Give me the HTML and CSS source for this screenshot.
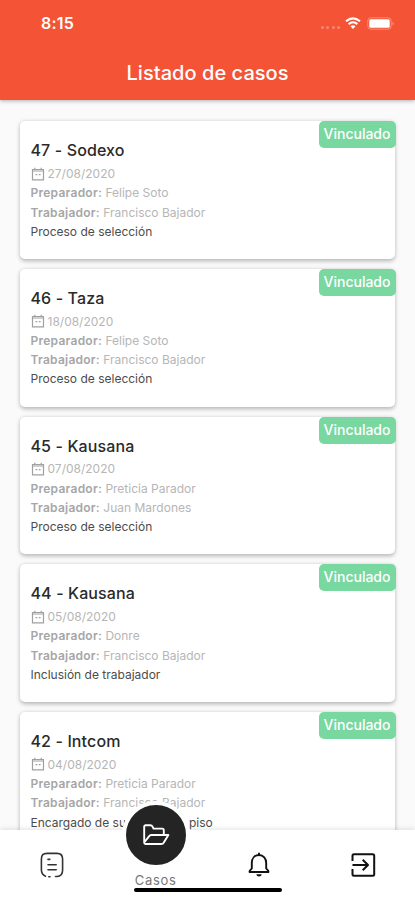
FILE: index.html
```html
<!DOCTYPE html>
<html lang="es">
<head>
<meta charset="utf-8">
<meta name="viewport" content="width=device-width, initial-scale=1">
<title>Listado de casos</title>
<link rel="stylesheet" href="styles.css">
</head>
<body>
<svg class="defs" width="0" height="0" aria-hidden="true">
  <symbol id="calendar" viewBox="0 0 14 14">
    <path d="M1.500 2.500h11v10.300h-11zM1.500 4h11M3.800 .7v2M10.200 .7v2M4.500 7.700h1.800M7.800 7.700h1.800" fill="none" stroke="currentColor" stroke-width="1.200"/>
  </symbol>
</svg>
<div class="app">
  <header class="header">
    <div class="status">
      <span class="time">8:15</span>
      <div class="indicators">
        <span class="signal"><i></i><i></i><i></i><i></i></span>
        <svg class="wifi" viewBox="0 0 16 12" width="16" height="12">
          <path d="M1 4.3Q8-1.6 15 4.3M3.6 7.1Q8 3.4 12.4 7.1" fill="none" stroke="#fff" stroke-width="2.1"/>
          <path d="M8 12L5.5 9.2Q8 7.2 10.5 9.2z" fill="#fff"/>
        </svg>
        <svg class="battery" viewBox="0 0 28 13" width="28" height="13">
          <rect x=".8" y=".8" width="23.4" height="11.4" rx="3.2" fill="none" stroke="#fff" stroke-opacity=".35"/>
          <rect x="2.3" y="2.2" width="20.4" height="8.6" rx="1.5" fill="#fff"/>
          <path d="M25.7 4.5q1.8 2 0 4z" fill="#fff" fill-opacity=".5"/>
        </svg>
      </div>
    </div>
    <h1>Listado de casos</h1>
  </header>
  <main class="list">
    <article class="card">
      <span class="badge">Vinculado</span>
      <h2>47 - Sodexo</h2>
      <p class="date"><svg><use href="#calendar"/></svg><span>27/08/2020</span></p>
      <p><b>Preparador:</b> Felipe Soto</p>
      <p><b>Trabajador:</b> Francisco Bajador</p>
      <p class="stage">Proceso de selección</p>
    </article>
    <article class="card">
      <span class="badge">Vinculado</span>
      <h2>46 - Taza</h2>
      <p class="date"><svg><use href="#calendar"/></svg><span>18/08/2020</span></p>
      <p><b>Preparador:</b> Felipe Soto</p>
      <p><b>Trabajador:</b> Francisco Bajador</p>
      <p class="stage">Proceso de selección</p>
    </article>
    <article class="card">
      <span class="badge">Vinculado</span>
      <h2>45 - Kausana</h2>
      <p class="date"><svg><use href="#calendar"/></svg><span>07/08/2020</span></p>
      <p><b>Preparador:</b> Preticia Parador</p>
      <p><b>Trabajador:</b> Juan Mardones</p>
      <p class="stage">Proceso de selección</p>
    </article>
    <article class="card">
      <span class="badge">Vinculado</span>
      <h2>44 - Kausana</h2>
      <p class="date"><svg><use href="#calendar"/></svg><span>05/08/2020</span></p>
      <p><b>Preparador:</b> Donre</p>
      <p><b>Trabajador:</b> Francisco Bajador</p>
      <p class="stage">Inclusión de trabajador</p>
    </article>
    <article class="card">
      <span class="badge">Vinculado</span>
      <h2>42 - Intcom</h2>
      <p class="date"><svg><use href="#calendar"/></svg><span>04/08/2020</span></p>
      <p><b>Preparador:</b> Preticia Parador</p>
      <p><b>Trabajador:</b> Francisco Bajador</p>
      <p class="stage">Encargado de supervisar el piso</p>
    </article>
  </main>
  <nav class="nav">
    <a class="tab">
      <svg viewBox="0 0 26 28" width="26" height="28" fill="none" stroke="#333" stroke-width="1.600" stroke-linecap="round">
        <path d="M6.500 25.200Q2.400 23.500 2.400 19V8Q2.400 2.400 8 2.400h10Q23.600 2.400 23.600 8v11Q23.600 25.500 18 25.500h-1.500M9.800 25.700h1.200M9 8.400h1.800M9 13.700h8.200M9 18.700h8.200"/>
      </svg>
    </a>
    <a class="tab active">
      <span class="bubble">
        <svg viewBox="0 0 28 24" width="28" height="24" fill="none" stroke="#fff" stroke-width="1.900" stroke-linejoin="round">
          <path d="M2.200 19.500V3.800Q2.200 2.200 3.800 2.200h4.600Q9.800 2.200 10.400 3.400L11.500 5.600h8.700Q21.800 5.600 21.800 7.200v4.600M2.200 19.500l5-6.400q.7-1.100 2-1.100h17.200l-4.600 7.600q-.8 1.400-2.600 1.400H3.400q-1.200 0-1.200-1.500z"/>
        </svg>
      </span>
      <span class="label">Casos</span>
    </a>
    <a class="tab">
      <svg viewBox="0 0 26 28" width="26" height="28" fill="none" stroke="#111" stroke-width="1.900" stroke-linejoin="round">
        <path d="M3.600 21h18.800v-1l-2.200-2.600V12C20.200 7.400 17.400 4 13 4S5.800 7.400 5.800 12v5.400L3.600 20z"/>
        <path d="M13 1.800v2.400"/>
        <path d="M10.300 23.300h5.400Q15.400 25.500 13 25.500T10.300 23.300z" fill="#111" stroke="none"/>
      </svg>
    </a>
    <a class="tab">
      <svg viewBox="0 0 26 28" width="26" height="28" fill="none" stroke="#111" stroke-width="2" stroke-linejoin="round">
        <path d="M2.500 10V4.700Q2.500 3.200 4 3.200h18.700Q24.200 3.200 24.200 4.700v18.600Q24.200 24.800 22.700 24.800H4Q2.500 24.800 2.500 23.300V18M2.500 14h15M12.700 8.700l5.300 5.300-5.300 5.300"/>
      </svg>
    </a>
    <span class="home-bar"></span>
  </nav>
</div>
</body>
</html>
```
FILE: styles.css
```css
* { box-sizing: border-box; margin: 0; padding: 0; }

body {
  font-family: Inter, "Liberation Sans", sans-serif;
  background: #fafafa;
}

.defs { position: absolute; }

.app {
  position: relative;
  display: flex;
  flex-direction: column;
  width: 415px;
  height: 900px;
  overflow: hidden;
}

.header {
  position: relative;
  flex: none;
  height: 100.400px;
  background: #f45336;
  color: #fff;
  box-shadow: 0 1px 4px rgba(0, 0, 0, .3);
}

.status {
  display: flex;
  justify-content: space-between;
  align-items: center;
  height: 46px;
  padding: 0 20px 0 41px;
}

.time {
  font-size: 16px;
  font-weight: 600;
  letter-spacing: .2px;
}

.indicators { display: flex; align-items: center; }

.signal {
  display: flex;
  gap: 2.300px;
  margin: 8px 5px 0 0;
}

.signal i {
  width: 3px;
  height: 3px;
  border-radius: 50%;
  background: rgba(255, 255, 255, .3);
}

.wifi { margin-right: 6px; }

h1 {
  font-size: 20px;
  line-height: 24px;
  font-weight: 500;
  letter-spacing: .05px;
  text-align: center;
  margin-top: 15px;
}

.list {
  flex: 1;
  min-height: 0;
  display: flex;
  flex-direction: column;
  gap: 10.200px;
  padding: 21px 20px 0;
  overflow: hidden;
}

.card {
  position: relative;
  flex: none;
  height: 137.500px;
  padding: 19px 10.500px 0;
  border-radius: 5px;
  background: #fff;
  box-shadow: 0 1.500px 4px rgba(0, 0, 0, .28);
}

.badge {
  position: absolute;
  top: 0;
  right: -.5px;
  width: 77px;
  height: 27px;
  border-radius: 5px;
  background: #79d7a0;
  color: #fff;
  font-size: 14px;
  font-weight: 500;
  line-height: 26px;
  text-align: center;
}

h2 {
  height: 23.400px;
  font-size: 16px;
  line-height: 21px;
  font-weight: 500;
  letter-spacing: .12px;
  color: #2a2a2a;
}

.card p {
  height: 19.200px;
  font-size: 12px;
  line-height: 19.200px;
  color: #b6b6b6;
  white-space: nowrap;
}

.card b {
  font-weight: 600;
  letter-spacing: .25px;
  color: #a6a6a6;
}

.card .date {
  display: flex;
  align-items: center;
  height: 19.600px;
}

.date svg { width: 14px; height: 14px; margin-right: 3px; color: #a0a0a0; }

.card .stage { color: #4c4c4c; }

.nav {
  position: relative;
  flex: none;
  display: grid;
  grid-template-columns: repeat(4, 1fr);
  height: 70px;
  background: #fff;
  box-shadow: 0 -1px 5px rgba(0, 0, 0, .12);
}

.tab {
  display: flex;
  flex-direction: column;
  align-items: center;
  padding-top: 21px;
}

.active { padding-top: 0; }

.bubble {
  display: flex;
  flex: none;
  align-items: center;
  justify-content: center;
  width: 68px;
  height: 68px;
  margin-top: -29px;
  border: 4px solid #fff;
  border-radius: 50%;
  background: #242424;
}

.label {
  margin-top: 3px;
  font-size: 13px;
  line-height: 16px;
  letter-spacing: .7px;
  color: #777;
}

.home-bar {
  position: absolute;
  left: 134px;
  bottom: 8px;
  width: 148px;
  height: 4px;
  border-radius: 2px;
  background: #000;
}
```
